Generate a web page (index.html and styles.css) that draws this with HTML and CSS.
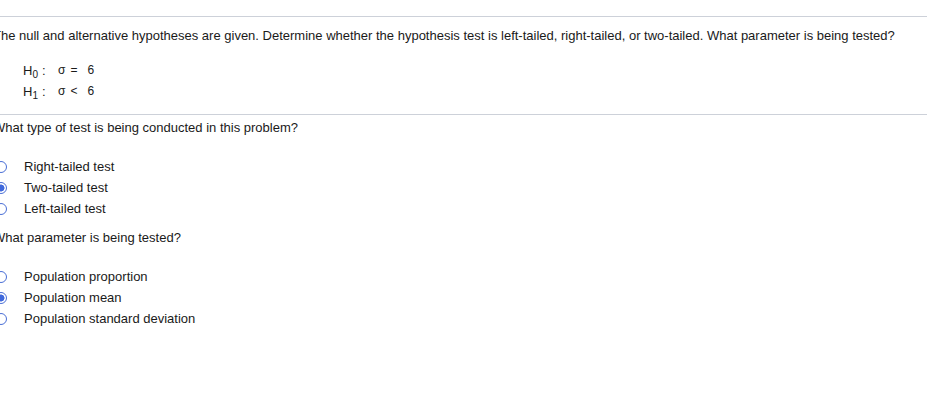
FILE: index.html
```html
<!DOCTYPE html>
<html>
<head>
<meta charset="utf-8">
<link rel="stylesheet" href="styles.css">
</head>
<body>
<div class="page">
  <div class="rule first"></div>
  <p class="prompt">The null and alternative hypotheses are given. Determine whether the hypothesis test is left-tailed, right-tailed, or two-tailed. What parameter is being tested?</p>
  <div class="hyps">
    <div class="hyp"><span class="hlabel">H<sub>0</sub><span class="colon">:</span></span><span class="math"><span class="sig">σ</span><span class="op">=</span><span>6</span></span></div>
    <div class="hyp"><span class="hlabel">H<sub>1</sub><span class="colon">:</span></span><span class="math"><span class="sig">σ</span><span class="op">&lt;</span><span>6</span></span></div>
  </div>
  <div class="rule second"></div>
  <p class="question">What type of test is being conducted in this problem?</p>
  <div class="options">
    <div class="option"><span class="radio"></span><span>Right-tailed test</span></div>
    <div class="option"><span class="radio checked"></span><span>Two-tailed test</span></div>
    <div class="option"><span class="radio"></span><span>Left-tailed test</span></div>
  </div>
  <p class="question q2">What parameter is being tested?</p>
  <div class="options">
    <div class="option"><span class="radio"></span><span>Population proportion</span></div>
    <div class="option"><span class="radio checked"></span><span>Population mean</span></div>
    <div class="option"><span class="radio"></span><span>Population standard deviation</span></div>
  </div>
</div>
</body>
</html>
```

FILE: styles.css
```css
html, body {
  margin: 0;
  padding: 0;
  background: #fff;
}
body {
  font-family: "Liberation Sans", Arial, sans-serif;
  font-size: 13px;
  color: #1a1a1a;
  overflow: hidden;
}
.page {
  padding-top: 16px;
  width: 927px;
}
.rule {
  height: 1px;
  background: #cdd1d9;
}
.prompt {
  margin: 11px 0 0 -7px;
  line-height: 16px;
  white-space: nowrap;
}
.hyps {
  margin-top: 16px;
  padding-left: 23px;
}
.hyp {
  display: flex;
  line-height: 21px;
  height: 21px;
}
.hlabel {
  width: 35px;
}
.hlabel sub {
  font-size: 10px;
  vertical-align: -3px;
  line-height: 0;
}
.colon {
  margin-left: 4px;
}
.math {
  font-size: 12px;
  display: flex;
}
.sig {
  margin-right: 5px;
}
.op {
  margin-right: 10px;
}
.rule.second {
  margin-top: 12px;
}
.question {
  margin: 5px 0 0 -7px;
  line-height: 16px;
}
.question.q2 {
  margin-top: 11px;
}
.options {
  margin: 20px 0 0 -5px;
}
.option {
  display: flex;
  align-items: center;
  height: 21px;
  line-height: 21px;
  gap: 17px;
}
.radio {
  box-sizing: border-box;
  width: 12px;
  height: 12px;
  border: 1px solid #4a6fd6;
  border-radius: 50%;
  background: #fff;
  flex: none;
}
.radio.checked {
  background: radial-gradient(circle, #3f68dc 0, #3f68dc 3.2px, #fff 3.8px);
}
```
